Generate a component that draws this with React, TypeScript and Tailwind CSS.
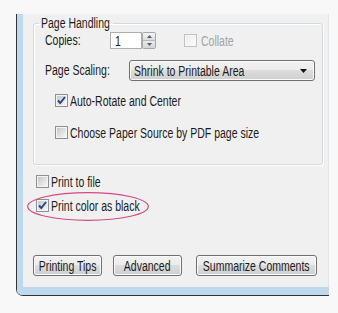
import clsx from "clsx";

// the reference text is a narrow face; Liberation Sans squeezed to fit
function T({ children, center = false }: { children: string; center?: boolean }) {
  return (
    <span
      className={clsx(
        "inline-block scale-x-[0.75] whitespace-nowrap leading-[16px]",
        center ? "origin-center" : "origin-left"
      )}
    >
      {children}
    </span>
  );
}

function CheckBox({ checked = false, disabled = false }: { checked?: boolean; disabled?: boolean }) {
  return (
    <span
      className={clsx(
        "relative flex h-[13px] w-[13px] shrink-0 border p-px",
        disabled ? "border-[#c2c2c2] bg-[#f7f7f7]" : "border-[#8e8f8f] bg-[#f4f4f4]"
      )}
    >
      <span
        className={clsx(
          "block h-full w-full bg-gradient-to-br",
          disabled ? "from-[#ededed] to-[#fbfbfb]" : "from-[#c4c7ca] to-[#f7f7f7]"
        )}
      />
      {checked && (
        <svg className="absolute inset-0" width="11" height="11" viewBox="0 0 11 11">
          <path d="M2 5.5 L4.3 8 L9 2" fill="none" stroke="#2a4580" strokeWidth="2" />
        </svg>
      )}
    </span>
  );
}

function Check({ label, checked = false }: { label: string; checked?: boolean }) {
  return (
    <div className="flex h-[13px] items-center gap-[2px]">
      <CheckBox checked={checked} />
      <T>{label}</T>
    </div>
  );
}

function Spinner() {
  return (
    <div className="flex h-[17px] w-[14px] flex-col overflow-hidden rounded-[2px] border border-[#a7a7a7]">
      <span className="flex h-1/2 items-center justify-center border-b border-[#b8b8b8] bg-[linear-gradient(#f6f6f6,#dcdcdc)]">
        <svg width="5" height="3" viewBox="0 0 5 3">
          <path d="M0 3 L2.5 0 L5 3 Z" fill="#4c5e78" />
        </svg>
      </span>
      <span className="flex h-1/2 items-center justify-center bg-[linear-gradient(#ececec,#d4d4d4)]">
        <svg width="5" height="3" viewBox="0 0 5 3">
          <path d="M0 0 L5 0 L2.5 3 Z" fill="#4c5e78" />
        </svg>
      </span>
    </div>
  );
}

function Button({ label, width }: { label: string; width: string }) {
  return (
    <button
      className={clsx(
        "flex h-[21px] items-center justify-center overflow-hidden rounded-[3px] border border-[#707070] bg-[linear-gradient(#f2f2f2_0%,#ebebeb_50%,#dddddd_50%,#cfcfcf_100%)] shadow-[inset_0_0_0_1px_#fbfbfb]",
        width
      )}
    >
      <T center>{label}</T>
    </button>
  );
}

export default function App() {
  return (
    <div className="h-[313px] w-[338px] overflow-hidden bg-[#f8f8f8] pl-[16px] pt-[14px] text-[14px] text-[#1c1c1c] [font-family:'Liberation_Sans',Arial,sans-serif]">
      <div className="w-[313px] rounded-bl-[7px] border-b border-l border-[#333]">
        <div className="rounded-bl-[5px] border-b-[8px] border-l-[6px] border-[#bed8ee]">
          <div className="h-[273px] border-r border-[#e1e6ea] bg-[#f0f0f0] pl-[10px] pt-[1px]">
            <fieldset className="w-[286px] rounded-[3px] border border-[#d2dae0] pb-[25px] pl-[11px] shadow-[inset_1px_1px_0_#fff,1px_1px_0_#fff]">
              <legend className="ml-[-6px] w-[74px] px-[2px] leading-[16px]">
                <T>Page Handling</T>
              </legend>

              <div className="mt-[1px] flex h-[17px] items-center">
                <span className="w-[65px]">
                  <T>Copies:</T>
                </span>
                <div className="flex h-[17px] w-[32px] items-center border border-[#abadb3] bg-white pl-[4px]">
                  <T>1</T>
                </div>
                <Spinner />
                <div className="ml-[28px] flex items-center gap-[4px] text-[#a3a3a3]">
                  <CheckBox disabled />
                  <T>Collate</T>
                </div>
              </div>

              <div className="mt-[11px] flex h-[21px] items-center">
                <span className="w-[84px]">
                  <T>Page Scaling:</T>
                </span>
                <div className="flex h-[21px] w-[186px] items-center justify-between overflow-hidden rounded-[3px] border border-[#707070] bg-[linear-gradient(#f2f2f2_0%,#ebebeb_50%,#dddddd_50%,#cfcfcf_100%)] pl-[4px] pr-[7px] shadow-[inset_0_0_0_1px_#fbfbfb]">
                  <T>Shrink to Printable Area</T>
                  <svg width="7" height="4" viewBox="0 0 7 4" className="shrink-0">
                    <path d="M0 0 L7 0 L3.5 4 Z" fill="#111" />
                  </svg>
                </div>
              </div>

              <div className="ml-[10px] mt-[13px]">
                <Check label="Auto-Rotate and Center" checked />
              </div>
              <div className="ml-[10px] mt-[19px]">
                <Check label="Choose Paper Source by PDF page size" />
              </div>
            </fieldset>

            <div className="ml-[3px] mt-[10px]">
              <Check label="Print to file" />
            </div>
            <div className="relative ml-[3px] mt-[11px]">
              <Check label="Print color as black" checked />
              <svg className="absolute left-[-9px] top-[-7px]" width="122" height="29" viewBox="0 0 122 29">
                <ellipse cx="61" cy="14.5" rx="60.3" ry="13.8" fill="none" stroke="#d34a84" strokeWidth="1.2" />
              </svg>
            </div>

            <div className="mt-[43px] flex items-center">
              <Button label="Printing Tips" width="w-[69px]" />
              <div className="ml-[11px]">
                <Button label="Advanced" width="w-[69px]" />
              </div>
              <div className="ml-[14px]">
                <Button label="Summarize Comments" width="w-[121px]" />
              </div>
            </div>
          </div>
        </div>
      </div>
    </div>
  );
}
